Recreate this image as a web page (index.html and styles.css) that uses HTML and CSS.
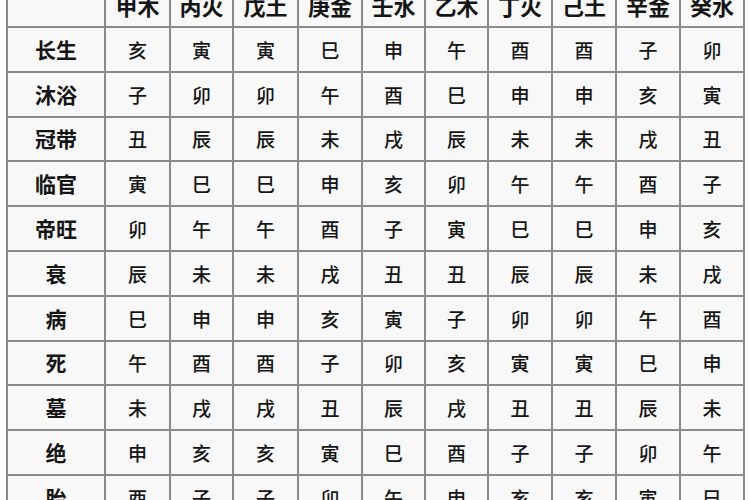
FILE: index.html
```html
<!DOCTYPE html>
<html lang="zh-CN">
<head>
<meta charset="utf-8">
<title>十二长生表</title>
<link rel="stylesheet" href="styles.css">
</head>
<body>
<div class="frame">
<table class="stages">
<colgroup>
<col class="c-label"><col class="c1"><col class="c2"><col class="c3"><col class="c4"><col class="c5"><col class="c6"><col class="c7"><col class="c8"><col class="c9"><col class="c10">
</colgroup>
<thead>
<tr><th></th><th>甲木</th><th>丙火</th><th>戊土</th><th>庚金</th><th>壬水</th><th>乙木</th><th>丁火</th><th>己土</th><th>辛金</th><th>癸水</th></tr>
</thead>
<tbody>
<tr><th>长生</th><td>亥</td><td>寅</td><td>寅</td><td>巳</td><td>申</td><td>午</td><td>酉</td><td>酉</td><td>子</td><td>卯</td></tr>
<tr><th>沐浴</th><td>子</td><td>卯</td><td>卯</td><td>午</td><td>酉</td><td>巳</td><td>申</td><td>申</td><td>亥</td><td>寅</td></tr>
<tr><th>冠带</th><td>丑</td><td>辰</td><td>辰</td><td>未</td><td>戌</td><td>辰</td><td>未</td><td>未</td><td>戌</td><td>丑</td></tr>
<tr><th>临官</th><td>寅</td><td>巳</td><td>巳</td><td>申</td><td>亥</td><td>卯</td><td>午</td><td>午</td><td>酉</td><td>子</td></tr>
<tr><th>帝旺</th><td>卯</td><td>午</td><td>午</td><td>酉</td><td>子</td><td>寅</td><td>巳</td><td>巳</td><td>申</td><td>亥</td></tr>
<tr><th>衰</th><td>辰</td><td>未</td><td>未</td><td>戌</td><td>丑</td><td>丑</td><td>辰</td><td>辰</td><td>未</td><td>戌</td></tr>
<tr><th>病</th><td>巳</td><td>申</td><td>申</td><td>亥</td><td>寅</td><td>子</td><td>卯</td><td>卯</td><td>午</td><td>酉</td></tr>
<tr><th>死</th><td>午</td><td>酉</td><td>酉</td><td>子</td><td>卯</td><td>亥</td><td>寅</td><td>寅</td><td>巳</td><td>申</td></tr>
<tr><th>墓</th><td>未</td><td>戌</td><td>戌</td><td>丑</td><td>辰</td><td>戌</td><td>丑</td><td>丑</td><td>辰</td><td>未</td></tr>
<tr><th>绝</th><td>申</td><td>亥</td><td>亥</td><td>寅</td><td>巳</td><td>酉</td><td>子</td><td>子</td><td>卯</td><td>午</td></tr>
<tr><th>胎</th><td>酉</td><td>子</td><td>子</td><td>卯</td><td>午</td><td>申</td><td>亥</td><td>亥</td><td>寅</td><td>巳</td></tr>
</tbody>
</table>
</div>
</body>
</html>
```

FILE: styles.css
```css
html, body {
  margin: 0;
  padding: 0;
  background: #ffffff;
  overflow: hidden;
  height: 500px;
}

.frame {
  padding-left: 6px;
  margin-top: -19px;
}

.stages {
  border-collapse: collapse;
  table-layout: fixed;
  width: 739px;
  background: #f8f8f8;
  font-family: "Noto Sans CJK SC", "Noto Sans", sans-serif;
  color: #151515;
}

.c-label { width: 98px; }
.c1 { width: 65px; }
.c2 { width: 63px; }
.c3 { width: 65px; }
.c4 { width: 64px; }
.c5 { width: 63px; }
.c6 { width: 63px; }
.c7 { width: 64px; }
.c8 { width: 64px; }
.c9 { width: 64px; }
.c10 { width: 64px; }

.stages th,
.stages td {
  border: 2px solid #8a8a8a;
  height: 42.8px;
  padding: 0;
  text-align: center;
  vertical-align: middle;
  line-height: 1;
}

.stages thead th {
  height: 43px;
  font-size: 22px;
  font-weight: 700;
}

.stages tbody th {
  font-size: 21px;
  font-weight: 700;
}

.stages td {
  font-size: 19px;
  font-weight: 500;
}
```
